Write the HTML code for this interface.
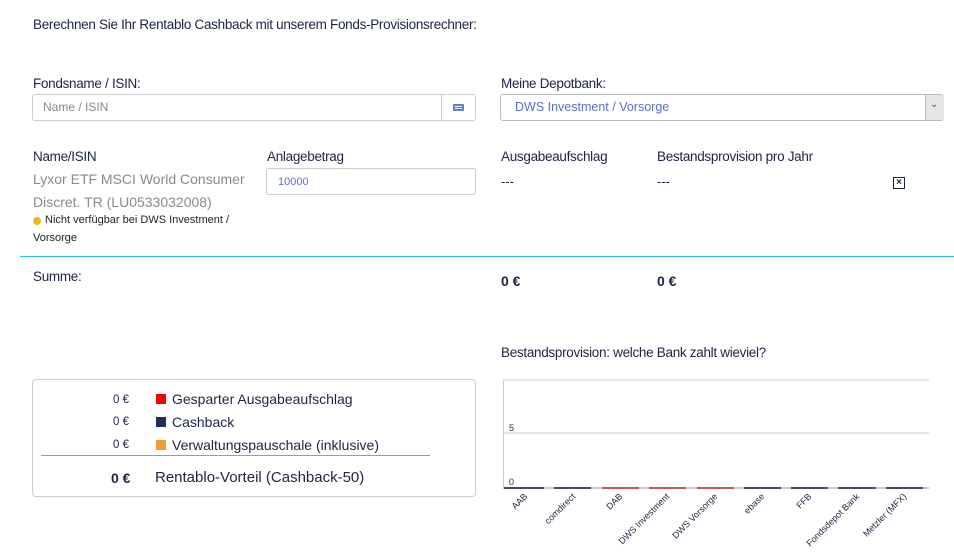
<!DOCTYPE html>
<html><head><meta charset="utf-8"><style>
body{margin:0;width:954px;height:560px;background:#fff;font-family:"Liberation Sans",sans-serif;color:#1c2541;position:relative;overflow:hidden}
.a{position:absolute;white-space:nowrap}
.lbl{font-size:13.5px;letter-spacing:-0.3px}
.inp{position:absolute;border:1px solid #ccc;border-radius:3px;background:#fff;box-sizing:border-box}
.gray{color:#888}
</style></head><body>
<div class="a lbl" style="left:33px;top:17px">Berechnen Sie Ihr Rentablo Cashback mit unserem Fonds-Provisionsrechner:</div>
<div class="a lbl" style="left:33px;top:76px">Fondsname / ISIN:</div>
<div class="inp" style="left:32px;top:94px;width:444px;height:27px"></div>
<div class="a" style="left:441px;top:95px;width:1px;height:25px;background:#ccc"></div>
<div class="a gray" style="left:43px;top:100px;font-size:12px">Name / ISIN</div>
<div class="a" style="left:453px;top:104px;width:11px;height:7px;background:#5b7fd6;border-radius:1px"></div>
<div class="a" style="left:455px;top:106px;width:7px;height:1px;background:#fff"></div>
<div class="a" style="left:455px;top:108px;width:7px;height:1px;background:#fff"></div>
<div class="a lbl" style="left:501px;top:76px">Meine Depotbank:</div>
<div class="inp" style="left:500px;top:94px;width:444px;height:27px;border-color:#bbb"></div>
<div class="a" style="left:925px;top:95px;width:18px;height:25px;background:#e6e6e6;border-left:1px solid #bbb"></div>
<div class="a" style="left:930px;top:99px;font-size:10px;color:#555">⌄</div>
<div class="a" style="left:515px;top:100px;font-size:12.5px;color:#5a6fd0">DWS Investment / Vorsorge</div>
<div class="a lbl" style="left:33px;top:149px">Name/ISIN</div>
<div class="a gray" style="left:33px;top:171px;font-size:14px;color:#8a8a8a">Lyxor ETF MSCI World Consumer</div>
<div class="a gray" style="left:33px;top:194px;font-size:14px;color:#8a8a8a">Discret. TR (LU0533032008)</div>
<div class="a" style="left:33px;top:217px;width:8px;height:8px;border-radius:50%;background:#f2b51c"></div>
<div class="a" style="left:45px;top:214px;font-size:11px;color:#222">Nicht verfügbar bei DWS Investment /</div>
<div class="a" style="left:33px;top:232px;font-size:11px;color:#222">Vorsorge</div>
<div class="a lbl" style="left:267px;top:149px">Anlagebetrag</div>
<div class="inp" style="left:266px;top:168px;width:210px;height:27px"></div>
<div class="a" style="left:278px;top:176px;font-size:11px;color:#5a6fd0">10000</div>
<div class="a lbl" style="left:501px;top:149px">Ausgabeaufschlag</div>
<div class="a lbl" style="left:657px;top:149px">Bestandsprovision pro Jahr</div>
<div class="a" style="left:501px;top:174px;font-size:13px">---</div>
<div class="a" style="left:657px;top:174px;font-size:13px">---</div>
<div class="a" style="left:893px;top:177px;width:10px;height:10px;border:1.5px solid #1c2541;font-size:10px;line-height:10px;text-align:center;font-weight:bold">×</div>
<div class="a" style="left:20px;top:256px;width:934px;height:1px;background:#2ec6db"></div>
<div class="a lbl" style="left:33px;top:269px">Summe:</div>
<div class="a" style="left:501px;top:273px;font-size:14px;font-weight:bold">0 €</div>
<div class="a" style="left:657px;top:273px;font-size:14px;font-weight:bold">0 €</div>
<div class="a lbl" style="left:501px;top:345px">Bestandsprovision: welche Bank zahlt wieviel?</div>
<div class="inp" style="left:32px;top:379px;width:444px;height:118px;border-radius:4px"></div>
<div class="a" style="left:113px;top:394px;font-size:11.5px">0 €</div>
<div class="a" style="left:113px;top:416px;font-size:11.5px">0 €</div>
<div class="a" style="left:113px;top:439px;font-size:11.5px">0 €</div>
<div class="a" style="left:156px;top:394px;width:10px;height:10px;background:#f00"></div>
<div class="a" style="left:156px;top:417px;width:10px;height:10px;background:#1f2f5c"></div>
<div class="a" style="left:156px;top:440px;width:10px;height:10px;background:#f79a32"></div>
<div class="a" style="left:172px;top:391px;font-size:14px">Gesparter Ausgabeaufschlag</div>
<div class="a" style="left:172px;top:414px;font-size:14px">Cashback</div>
<div class="a" style="left:172px;top:437px;font-size:14px">Verwaltungspauschale (inklusive)</div>
<div class="a" style="left:41px;top:455px;width:389px;height:1px;background:#2ec6db"></div>
<div class="a" style="left:111px;top:470px;font-size:14px;font-weight:bold">0 €</div>
<div class="a" style="left:155px;top:469px;font-size:15px">Rentablo-Vorteil (Cashback-50)</div>
<svg class="a" style="left:490px;top:370px" width="464" height="190">
<g stroke="#ccc" stroke-width="1"><line x1="13" y1="10" x2="439" y2="10"/><line x1="13" y1="63" x2="439" y2="63"/><line x1="13.5" y1="10" x2="13.5" y2="118"/></g>
<line x1="13" y1="118" x2="439" y2="118" stroke="#999"/>
<g font-family="Liberation Sans" font-size="9" fill="#1c2541"><text x="19" y="61">5</text><text x="19" y="115">0</text></g>
<g stroke-width="2">
<line x1="14" y1="118" x2="54" y2="118" stroke="#454b66"/><line x1="64" y1="118" x2="101" y2="118" stroke="#454b66"/>
<line x1="112" y1="118" x2="149" y2="118" stroke="#c05a4a"/><line x1="159" y1="118" x2="196" y2="118" stroke="#c05a4a"/>
<line x1="207" y1="118" x2="244" y2="118" stroke="#c05a4a"/><line x1="254" y1="118" x2="291" y2="118" stroke="#454b66"/>
<line x1="301" y1="118" x2="338" y2="118" stroke="#454b66"/><line x1="348" y1="118" x2="386" y2="118" stroke="#454b66"/>
<line x1="396" y1="118" x2="433" y2="118" stroke="#454b66"/></g>
<g font-family="Liberation Sans" font-size="9" fill="#1c2541" text-anchor="end">
<text transform="translate(38,127) rotate(-45)">AAB</text>
<text transform="translate(86,127) rotate(-45)">comdirect</text>
<text transform="translate(133,127) rotate(-45)">DAB</text>
<text transform="translate(180,127) rotate(-45)">DWS Investment</text>
<text transform="translate(228,127) rotate(-45)">DWS Vorsorge</text>
<text transform="translate(275,127) rotate(-45)">ebase</text>
<text transform="translate(322,127) rotate(-45)">FFB</text>
<text transform="translate(370,127) rotate(-45)">Fondsdepot Bank</text>
<text transform="translate(417,127) rotate(-45)">Metzler (MFX)</text>
</g></svg>
</body></html>
